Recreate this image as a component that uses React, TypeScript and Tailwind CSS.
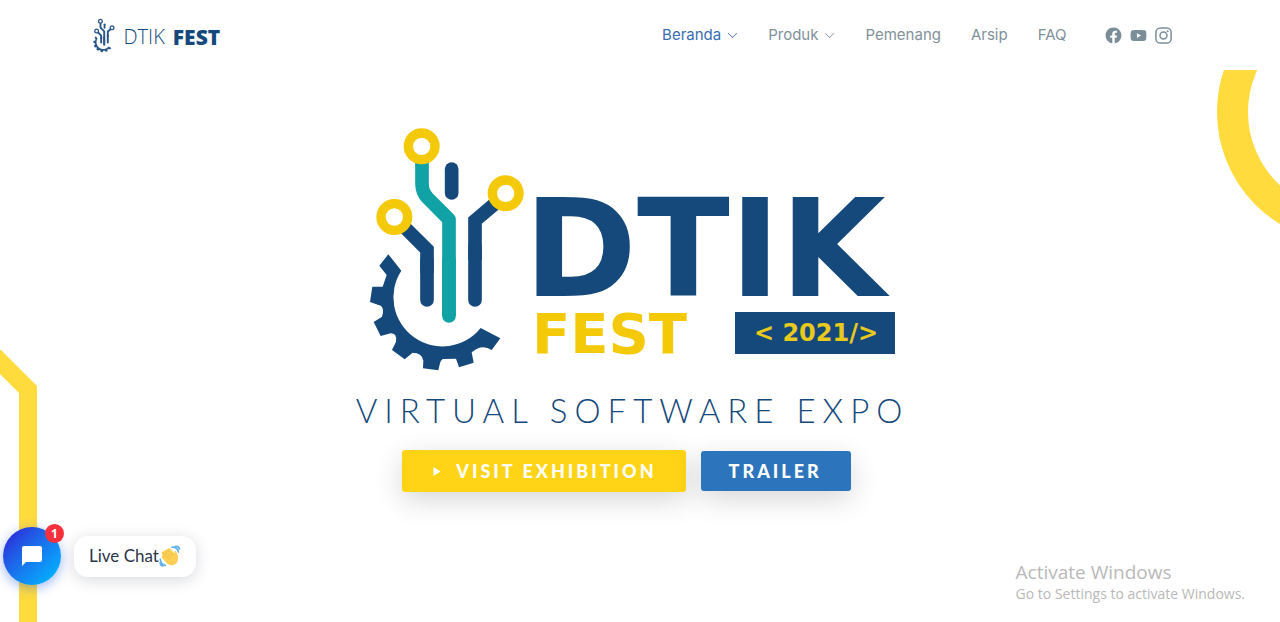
import React from "react";
import { BsChevronDown } from "react-icons/bs";
import { BiLogoFacebookCircle, BiLogoYoutube } from "react-icons/bi";

const GEAR =
  "M85 403L124 452A147 147 0 0 0 362 624L421 655L395 690Q366 670 335 697L341 728L297 742L288 716L248 717Q241 722 240 730L235 751L189 745L190 722Q186 698 158 698L134 718L96 690L108 665Q112 640 92 640L62 648L41 606L66 590Q74 565 62 557L30 546L37 500L68 500L80 465L58 437Z";

type EmblemProps = { navy: string; teal: string; ring: string };

function EmblemShapes({ navy, teal, ring }: EmblemProps) {
  return (
    <g fill="none" strokeWidth="41">
      <path d={GEAR} fill={navy} stroke="none" />
      <g stroke={navy}>
        <path d="M130 318L201 389V460" />
        <path d="M201 420V540" strokeLinecap="round" />
        <path d="M418 240L345 302V420" />
        <path d="M345 380V540" strokeLinecap="round" />
        <path d="M275 147V219" strokeLinecap="round" />
      </g>
      <path d="M186 120V192Q186 216 203 234L267 298V588" stroke={teal} strokeLinejoin="round" />
      <path d="M267 420V588" stroke={teal} strokeLinecap="round" />
      <g stroke={ring} strokeWidth="28" fill="#fff">
        <circle cx="185" cy="79" r="40" />
        <circle cx="437" cy="220" r="40" />
        <circle cx="103" cy="291" r="40" />
      </g>
    </g>
  );
}

function HeroLogo() {
  return (
    <svg
      viewBox="365 125 535 250"
      className="h-auto w-full max-w-[535px]"
      role="img"
      aria-label="DTIK Fest 2021"
    >
      <g transform="translate(360 120) scale(.33333)">
        <EmblemShapes navy="#15497b" teal="#10a2a5" ring="#f4c907" />
      </g>
      <g fontWeight="700" className="font-['DejaVu_Sans',sans-serif]">
        <text x="524" y="296" fontSize="136" fill="#15497b">DTIK</text>
        <text x="532" y="353" fontSize="56" fill="#f4c907">FEST</text>
        <rect x="735" y="312" width="160" height="42" fill="#15497b" />
        <text x="816" y="341" fontSize="24" textAnchor="middle" fill="#e9c91c">&lt; 2021/&gt;</text>
      </g>
    </svg>
  );
}

function InstagramIcon({ className }: { className?: string }) {
  return (
    <svg viewBox="0 0 19 19" className={className} aria-hidden="true">
      <rect x="1.900" y="1.900" width="15.200" height="15.200" rx="4.400" fill="none" stroke="currentColor" strokeWidth="1.500" />
      <circle cx="9.500" cy="9.500" r="3.500" fill="none" stroke="currentColor" strokeWidth="1.500" />
      <circle cx="13.700" cy="5.300" r="1" fill="currentColor" />
    </svg>
  );
}

function WavingHand() {
  return (
    <svg viewBox="0 0 22 22" className="h-[22px] w-[22px]" aria-hidden="true">
      <g fill="none" stroke="#5aaeea" strokeWidth="1.6" strokeLinecap="round">
        <path d="M13 2.2Q18 1.5 19.5 7" />
        <path d="M16.5 1.2Q20 1 20.5 4" />
        <path d="M1.2 14Q1.5 19 6.500 20.500" />
        <path d="M1 18Q1.500 20.500 4 21" />
      </g>
      <path
        d="M2.500 7.500Q4 5.500 5.500 6.500Q5.500 4 8 4.500Q9.500 2.300 11.500 4L15.500 8.500Q15 5.500 17 6Q19 9 19.200 13Q19 18.500 14.500 20Q10.500 20.800 7.500 18L3 13Q1.800 11.200 3.500 10Z"
        fill="#fbd055"
      />
      <path
        d="M4 8L10.500 14.500M6 6.500L12 12.500M9 5L14 10.500"
        fill="none"
        stroke="#edb23c"
        strokeWidth=".8"
        strokeLinecap="round"
      />
    </svg>
  );
}

const links = [
  { label: "Beranda", active: true, menu: true },
  { label: "Produk", menu: true },
  { label: "Pemenang" },
  { label: "Arsip" },
  { label: "FAQ" },
];

const socials = [
  { label: "Facebook", Icon: BiLogoFacebookCircle },
  { label: "YouTube", Icon: BiLogoYoutube },
  { label: "Instagram", Icon: InstagramIcon },
];

function Header() {
  return (
    <header className="bg-white pr-[15px]">
      <div className="mx-auto flex h-[70px] max-w-[1080px] items-center justify-between">
        <a href="#" className="flex items-center gap-[9px] font-['Open_Sans',sans-serif] text-[21px] text-[#15497b]">
          <svg viewBox="25 15 475 745" className="h-[35px] w-[22px]" aria-hidden="true">
            <EmblemShapes navy="#2b5688" teal="#2b5688" ring="#2b5688" />
          </svg>
          <span className="flex items-center gap-[8px] pt-[3px] leading-[28px]">
            <span className="text-[20px] font-light">DTIK</span>
            <span className="font-extrabold">FEST</span>
          </span>
        </a>
        <div className="flex items-center gap-[37px]">
          <nav className="flex items-center gap-[30px] font-['Inter',sans-serif] text-[15px]">
            {links.map((l) => (
              <a
                key={l.label}
                href="#"
                className={
                  l.active
                    ? "flex items-center gap-[6px] text-[#3b6db0]"
                    : "flex items-center gap-[6px] text-[#7f919a]"
                }
              >
                {l.label}
                {l.menu && <BsChevronDown className="h-[11px] w-[11px]" />}
              </a>
            ))}
          </nav>
          <div className="flex items-center gap-[6px] text-[#7b8e98]">
            {socials.map(({ label, Icon }) => (
              <a key={label} href="#" aria-label={label}>
                <Icon className="h-[19px] w-[19px]" />
              </a>
            ))}
          </div>
        </div>
      </div>
    </header>
  );
}

export default function App() {
  return (
    <div className="relative flex min-h-screen flex-col bg-white">
      <Header />
      <main className="relative flex flex-1 flex-col items-center overflow-hidden pt-[55px] pr-[15px] pb-16">
        <svg viewBox="0 0 80 160" className="absolute top-0 right-0 h-[160px] w-[80px]" aria-hidden="true">
          <circle cx="148" cy="42" r="115.500" fill="none" stroke="#ffdb3e" strokeWidth="31" />
        </svg>
        <svg viewBox="0 0 40 272" className="absolute bottom-0 left-0 h-[272px] w-[40px]" aria-hidden="true">
          <path d="M0 -1L37 36V272H19V43L0 24Z" fill="#ffdb3e" />
        </svg>
        <HeroLogo />
        <h1 className="mt-[13px] text-center font-['Lato',sans-serif] text-[33px] leading-[44px] font-light tracking-[7px] text-[#15497b]">
          VIRTUAL SOFTWARE EXPO
        </h1>
        <div className="mt-[18px] flex flex-wrap items-center justify-center gap-[15px] pr-[12px] font-['Lato',sans-serif] text-[18px] font-black tracking-[3px] text-white">
          <a
            href="#"
            className="flex h-[42px] items-center gap-[15px] rounded-[3px] bg-[#ffd416] pr-[29px] pl-[31px] shadow-[0_8px_28px_rgba(0,0,0,0.16)]"
          >
            <svg viewBox="0 0 8 10" className="h-[9px] w-[8px]" aria-hidden="true">
              <path d="M0 0L8 5L0 10Z" fill="currentColor" />
            </svg>
            VISIT EXHIBITION
          </a>
          <a
            href="#"
            className="flex h-[40px] items-center rounded-[3px] bg-[#2c74bb] pr-[29px] pl-[28px] shadow-[0_8px_28px_rgba(0,0,0,0.16)]"
          >
            TRAILER
          </a>
        </div>
      </main>

      <div className="absolute bottom-[37px] left-[3px] flex items-center gap-[13px]">
        <button
          type="button"
          aria-label="Open live chat"
          className="relative flex h-[58px] w-[58px] items-center justify-center rounded-full bg-linear-to-br from-[#2837dc] from-15% to-[#05b1ff] to-90% shadow-[0_3px_12px_rgba(40,90,230,0.45)]"
        >
          <svg viewBox="0 0 20 20" className="h-[20px] w-[20px]" aria-hidden="true">
            <path d="M2 0H18Q20 0 20 2V14Q20 16 18 16H4L0 20V2Q0 0 2 0Z" fill="#fff" />
          </svg>
          <span className="absolute -top-[3px] -right-[3px] flex h-[19px] w-[19px] items-center justify-center rounded-full bg-[#f8303c] font-['Open_Sans',sans-serif] text-[12px] font-bold text-white">
            1
          </span>
        </button>
        <div className="flex h-[41px] items-center rounded-[14px] bg-white px-[15px] font-['Lato',sans-serif] text-[17px] text-[#2c3448] shadow-[0_3px_16px_rgba(0,20,50,0.16)]">
          Live Chat
          <WavingHand />
        </div>
      </div>

      <aside className="absolute right-[35px] bottom-[18px] font-['Open_Sans',sans-serif] text-[#b9b9b9]">
        <p className="text-[19px] leading-[24px]">Activate Windows</p>
        <p className="text-[14px] leading-[20px]">Go to Settings to activate Windows.</p>
      </aside>
    </div>
  );
}
